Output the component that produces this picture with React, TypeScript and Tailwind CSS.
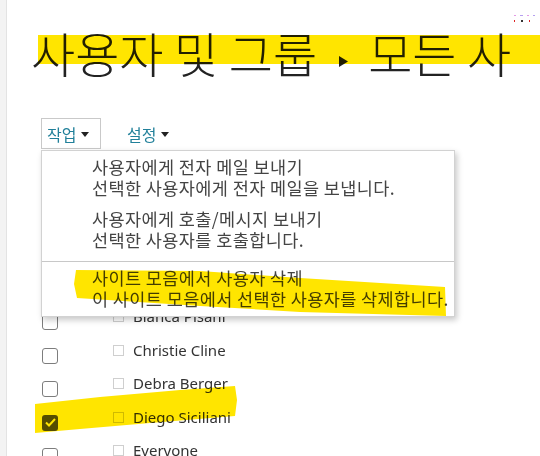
import React from "react";

const people = ["Bianca Pisani", "Christie Cline", "Debra Berger", "Diego Siciliani", "Everyone"];

function Caret() {
  return (
    <svg width="8" height="5" viewBox="0 0 8 5" className="ml-[5px] mt-[2px]">
      <path d="M0 0 H8 L4 5 Z" fill="#222" />
    </svg>
  );
}

function MenuItem({ title, desc }: { title: string; desc: string }) {
  return (
    <div className="pl-[50px] text-[17.5px] leading-[21px] tracking-[0.4px] text-[#444] whitespace-nowrap">
      <div>{title}</div>
      <div>{desc}</div>
    </div>
  );
}

export default function App() {
  return (
    <div className="relative w-[540px] h-[456px] overflow-hidden bg-white flex font-['Noto_Sans_CJK_KR',sans-serif]">
      <div className="w-[7px] shrink-0 bg-[#f3f3f3] border-r border-[#e3e3e3]" />

      <div className="flex-1 flex flex-col">
        <div className="h-[3px] w-[505px] bg-[#efefef]" />

        {/* breadcrumb title */}
        <h1 className="mt-[28px] ml-[24px] h-[48px] flex items-center text-[48px] leading-[48px] font-light text-[#222] whitespace-nowrap">
          <span>사용자 및 그룹</span>
          <svg width="9" height="11" viewBox="0 0 9 11" className="ml-[22px] mr-[20px] mt-[19px]">
            <path d="M0 0 L9 5.5 L0 11 Z" fill="#222" />
          </svg>
          <span>모든 사</span>
        </h1>

        {/* toolbar */}
        <div className="mt-[42px] ml-[34px] flex items-center text-[16px] text-[#21809a]">
          <div className="h-[31px] w-[60px] border border-[#c9c9c9] flex items-center pl-[5px]">
            <span>작업</span>
            <Caret />
          </div>
          <div className="ml-[26px] flex items-center">
            <span>설정</span>
            <Caret />
          </div>
        </div>
        <div className="mt-[12px] ml-[25px] w-[481px] h-[2px] bg-[#dadada]" />

        {/* user list */}
        <div className="mt-[145px] flex flex-col font-['Noto_Sans',sans-serif] text-[15px] text-[#333]">
          {people.map((name) => {
            const checked = name === "Diego Siciliani";
            return (
              <div key={name} className="h-[33.5px] flex items-start shrink-0">
                <div
                  className={
                    checked
                      ? "ml-[35px] mt-[8px] w-[16px] h-[16px] rounded-[3px] bg-[#555] flex items-center justify-center"
                      : "ml-[35px] mt-[8px] w-[16px] h-[16px] rounded-[3px] border-[1.5px] border-[#7d7d7d]"
                  }
                >
                  {checked && (
                    <svg width="11" height="9" viewBox="0 0 11 9">
                      <path d="M1 4.5 L4 7.5 L10 1" stroke="#fff" strokeWidth="2" fill="none" />
                    </svg>
                  )}
                </div>
                <div className="ml-[55px] mt-[5px] w-[11px] h-[11px] border border-[#cfcfcf]" />
                <span className="ml-[9px] leading-[20px]">{name}</span>
              </div>
            );
          })}
        </div>
      </div>

      {/* dropdown menu */}
      <div className="absolute left-[41px] top-[150px] w-[414px] h-[167px] bg-white border border-[#d2d2d2] shadow-[2px_3px_6px_rgba(0,0,0,0.22)] pt-[5px]">
        <MenuItem title="사용자에게 전자 메일 보내기" desc="선택한 사용자에게 전자 메일을 보냅니다." />
        <div className="mt-[10px]">
          <MenuItem title="사용자에게 호출/메시지 보내기" desc="선택한 사용자를 호출합니다." />
        </div>
        <div className="mt-[11px] h-px bg-[#c8c8c8]" />
        <div className="mt-[5px]">
          <MenuItem title="사이트 모음에서 사용자 삭제" desc="이 사이트 모음에서 선택한 사용자를 삭제합니다." />
        </div>
      </div>

      {/* faint marks top right */}
      <div className="absolute left-[514px] top-[15px] flex gap-[4px] items-end">
        <span className="w-[2px] h-[1px] bg-[#e39ae6]" />
        <span className="w-[3px] h-[1px] bg-[#b5a0f0]" />
        <span className="w-[2px] h-[1px] bg-[#e39ae6]" />
        <span className="w-[2px] h-[1px] bg-[#b5a0f0]" />
      </div>
      <div className="absolute left-[514px] top-[20px] flex gap-[6px]">
        <span className="w-[1px] h-[2px] bg-[#d22]" />
        <span className="w-[2px] h-[2px] bg-[#333]" />
        <span className="w-[1px] h-[2px] bg-[#d22]" />
      </div>

      {/* highlighter strokes */}
      <svg
        className="absolute left-0 top-0 pointer-events-none mix-blend-multiply"
        width="540"
        height="456"
        viewBox="0 0 540 456"
      >
        <rect x="38" y="35" width="502" height="29" fill="#ffe500" />
        <polygon
          points="76,270 200,271 300,278 445,287 446,316 300,312 200,306 77,298 74,284"
          fill="#ffe500"
        />
        <polygon
          points="35,404 100,397 180,390 235,386 237,400 235,416 150,423 80,429 35,433"
          fill="#ffe500"
        />
      </svg>
    </div>
  );
}
